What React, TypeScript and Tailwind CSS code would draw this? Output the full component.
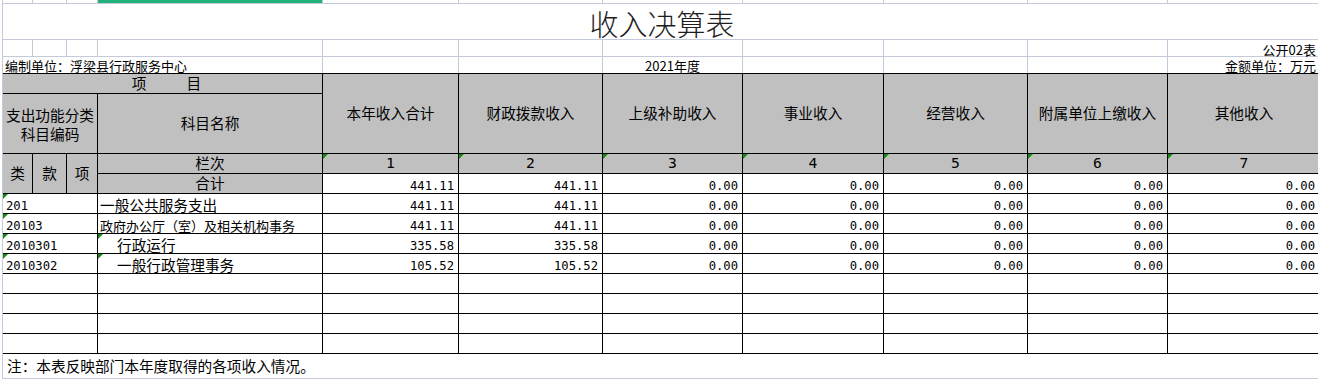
import React from 'react';

const COLS = 'grid grid-cols-[30px_34px_31px_225px_136px_144px_140px_141px_144px_140px_153px]';

const HEADS = ['本年收入合计', '财政拨款收入', '上级补助收入', '事业收入', '经营收入', '附属单位上缴收入', '其他收入'];

type Row = { code: string; name: string; vals: string[]; indent?: boolean; small?: boolean; codeMark?: boolean; nameMark?: boolean };

const ZERO5 = ['0.00', '0.00', '0.00', '0.00', '0.00'];

const ROWS: Row[] = [
  { code: '201', name: '一般公共服务支出', vals: ['441.11', '441.11', ...ZERO5], codeMark: true },
  { code: '20103', name: '政府办公厅（室）及相关机构事务', vals: ['441.11', '441.11', ...ZERO5], small: true, codeMark: true },
  { code: '2010301', name: '行政运行', vals: ['335.58', '335.58', ...ZERO5], indent: true, codeMark: true, nameMark: true },
  { code: '2010302', name: '一般行政管理事务', vals: ['105.52', '105.52', ...ZERO5], indent: true, codeMark: true, nameMark: true },
  { code: '', name: '', vals: ['', '', '', '', '', '', ''] },
  { code: '', name: '', vals: ['', '', '', '', '', '', ''] },
  { code: '', name: '', vals: ['', '', '', '', '', '', ''] },
  { code: '', name: '', vals: ['', '', '', '', '', '', ''] },
];

// Excel's little green "number stored as text" corner
const Mark = () => (
  <span className="absolute left-0 top-0 h-0 w-0 border-t-[5px] border-r-[5px] border-t-[#138a13] border-r-transparent" />
);

const gl = 'border-r border-b border-[#c5cadb]';
const th = 'flex items-center justify-center border-r border-b border-black bg-[#c0c0c0] text-[14.67px] text-black';
const td = 'relative flex items-end border-r border-b border-black bg-white leading-none text-black';
const mono = "font-['DejaVu_Sans_Mono',monospace] text-[12.2px]";

// last column runs past the window edge, so its text needs a wider right gap
const numPad = (i: number) => (i === 6 ? 'pr-[5px]' : 'pr-[4px]');

const App: React.FC = () => {
  return (
    <div className="h-[379px] w-[1318px] overflow-hidden bg-white pl-[2px] font-['Noto_Sans_CJK_SC',sans-serif] text-black">
      <div className="w-[1330px] border-l border-[#c5cadb]">
        {/* sheet rows above the table */}
        <div className={`${COLS} grid-rows-[4px_36px_17px_16px]`}>
          <div className={gl} />
          <div className={gl} />
          <div className={gl} />
          <div className={`${gl} flex flex-col`}><div className="h-[3px] bg-[#21b07a]" /></div>
          <div className={gl} />
          <div className={gl} />
          <div className={gl} />
          <div className={gl} />
          <div className={gl} />
          <div className={gl} />
          <div className={gl} />

          <div className="col-span-11 flex items-end justify-center border-b border-[#c5cadb] pb-[1px] text-[29px] font-light leading-none text-[#1e1e1e]">
            收入决算表
          </div>

          <div className={gl} />
          <div className={gl} />
          <div className={gl} />
          <div className={gl} />
          <div className={gl} />
          <div className={gl} />
          <div className={gl} />
          <div className={gl} />
          <div className={gl} />
          <div className={gl} />
          <div className="flex items-end justify-end border-b border-[#c5cadb] pr-[5px] text-[13px] leading-none">公开02表</div>

          <div className="col-span-4 flex items-end border-r border-[#c5cadb] pb-[1px] pl-[2px] text-[13px] leading-[13px]">编制单位：浮梁县行政服务中心</div>
          <div className="border-r border-[#c5cadb]" />
          <div className="border-r border-[#c5cadb]" />
          <div className="flex items-end justify-center border-r border-[#c5cadb] pb-[1px] text-[13px] leading-[13px]">2021年度</div>
          <div className="border-r border-[#c5cadb]" />
          <div className="border-r border-[#c5cadb]" />
          <div className="border-r border-[#c5cadb]" />
          <div className="flex items-end justify-end pb-[1px] pr-[5px] text-[13px] leading-[13px]">金额单位：万元</div>
        </div>

        {/* the table */}
        <div className={`${COLS} grid-rows-[20px_60px_20px_20px_repeat(8,20px)] border-t border-black`}>
          <div className={`${th} col-span-4 gap-[40px] pl-[8px] leading-none`}>
            <span>项</span>
            <span>目</span>
          </div>
          {HEADS.map(h => (
            <div key={h} className={`${th} row-span-2 leading-none`}>{h}</div>
          ))}

          <div className={`${th} col-span-3 flex-col`}>
            <span className="block leading-[19px]">支出功能分类</span>
            <span className="block leading-[19px]">科目编码</span>
          </div>
          <div className={`${th} leading-none`}>科目名称</div>

          <div className={`${th} row-span-2 leading-none`}>类</div>
          <div className={`${th} row-span-2 leading-none`}>款</div>
          <div className={`${th} row-span-2 leading-none`}>项</div>
          <div className={`${th} leading-none`}>栏次</div>
          {[1, 2, 3, 4, 5, 6, 7].map(n => (
            <div key={n} className={`${th} relative leading-none ${mono}`}>
              <Mark />
              {n}
            </div>
          ))}

          <div className={`${th} leading-none`}>合计</div>
          {['441.11', '441.11', ...ZERO5].map((v, i) => (
            <div key={i} className={`${td} justify-end pb-[1px] ${numPad(i)} ${mono}`}>{v}</div>
          ))}

          {ROWS.map((r, ri) => (
            <React.Fragment key={ri}>
              <div className={`${td} col-span-3 pb-[1px] pl-[3px] ${mono}`}>
                {r.codeMark && <Mark />}
                {r.code}
              </div>
              <div className={`${td} ${r.indent ? 'pl-[19px]' : 'pl-[2px]'} ${r.small ? 'pb-[1px] text-[13px]' : 'text-[14.67px]'}`}>
                {r.nameMark && <Mark />}
                {r.name}
              </div>
              {r.vals.map((v, i) => (
                <div key={i} className={`${td} justify-end pb-[1px] ${numPad(i)} ${mono}`}>{v}</div>
              ))}
            </React.Fragment>
          ))}
        </div>

        {/* footnote */}
        <div className="flex h-[25px] items-center border-b border-[#c5cadb] pl-[4px] text-[14.67px] leading-none">
          注：本表反映部门本年度取得的各项收入情况。
        </div>
      </div>
    </div>
  );
};

export default App;
